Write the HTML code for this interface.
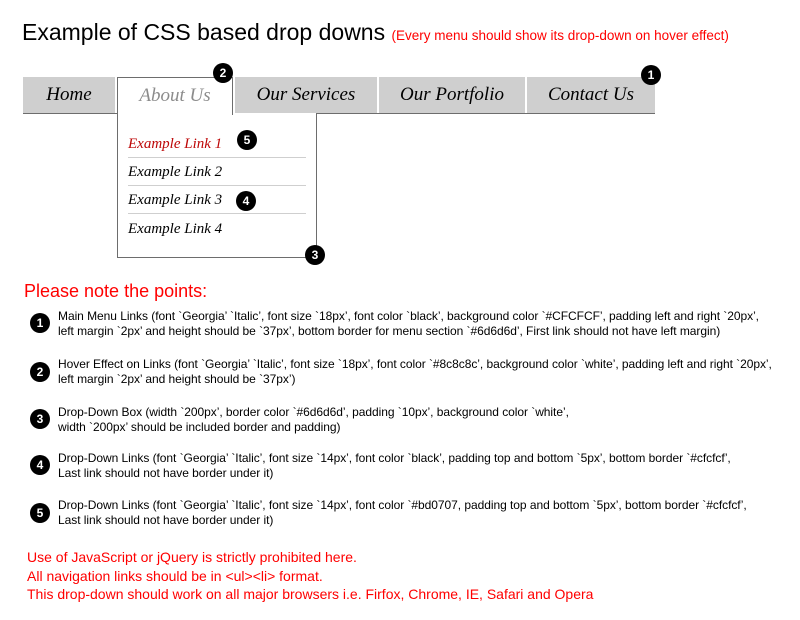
<!DOCTYPE html>
<html><head><meta charset="utf-8"><style>
*{margin:0;padding:0;box-sizing:border-box}
body{width:800px;height:620px;background:#fff;position:relative;overflow:hidden;font-family:"Liberation Sans","DejaVu Sans",sans-serif}
.a{position:absolute;white-space:nowrap}
.h1{left:22px;top:19px;font-size:23px;color:#000}
.red{color:#f00}
.m{position:absolute;top:77px;height:36px;background:#cfcfcf;font-family:"Liberation Serif",serif;font-style:italic;font-size:19px;line-height:36px;text-align:center}
.bb{position:absolute;left:23px;top:113px;width:632px;height:1px;background:#6d6d6d}
.dd{position:absolute;left:117px;top:113px;width:200px;height:145px;border:1px solid #6d6d6d;border-top:none;background:#fff}
.about{position:absolute;left:117px;top:77px;width:116px;height:38px;background:#fff;border:1px solid #6d6d6d;border-bottom:none;font-family:"Liberation Serif",serif;font-style:italic;font-size:19px;line-height:36px;text-align:center;color:#8c8c8c}
.lk{position:absolute;left:128px;width:178px;font-family:"Liberation Serif",serif;font-style:italic;font-size:15px;height:28px;line-height:28px;border-bottom:1px solid #cfcfcf}
.c{position:absolute;width:20px;height:20px;border-radius:50%;background:#000;color:#fff;font-size:12px;font-weight:bold;text-align:center;line-height:20px}
.p{position:absolute;left:58px;font-size:12px;line-height:15px;white-space:nowrap;letter-spacing:-0.05px}
.b{position:absolute;left:27px;font-size:14px;color:#f00;line-height:18px;white-space:nowrap}
</style></head><body>
<div class="a h1">Example of CSS based drop downs <span class="red" style="font-size:13.5px">(Every menu should show its drop-down on hover effect)</span></div>

<div class="m" style="left:23px;width:92px">Home</div>
<div class="m" style="left:235px;width:142px">Our Services</div>
<div class="m" style="left:379px;width:146px">Our Portfolio</div>
<div class="m" style="left:527px;width:128px">Contact Us</div>
<div class="bb"></div>
<div class="dd"></div>
<div class="about">About Us</div>
<div class="lk" style="top:130px;color:#bd0707">Example Link 1</div>
<div class="lk" style="top:158px">Example Link 2</div>
<div class="lk" style="top:186px">Example Link 3</div>
<div class="lk" style="top:215px;border:none">Example Link 4</div>

<div class="c" style="left:213px;top:63px">2</div>
<div class="c" style="left:641px;top:65px">1</div>
<div class="c" style="left:237px;top:130px">5</div>
<div class="c" style="left:236px;top:191px">4</div>
<div class="c" style="left:305px;top:245px">3</div>

<div class="a red" style="left:24px;top:281px;font-size:18px">Please note the points:</div>

<div class="c" style="left:30px;top:313px">1</div>
<div class="p" style="top:309px">Main Menu Links (font `Georgia’ `Italic’, font size `18px’, font color `black’, background color `#CFCFCF’, padding left and right `20px’,<br>left margin `2px’ and height should be `37px’, bottom border for menu section `#6d6d6d’, First link should not have left margin)</div>
<div class="c" style="left:30px;top:362px">2</div>
<div class="p" style="top:357px">Hover Effect on Links (font `Georgia’ `Italic’, font size `18px’, font color `#8c8c8c’, background color `white’, padding left and right `20px’,<br>left margin `2px’ and height should be `37px’)</div>
<div class="c" style="left:30px;top:409px">3</div>
<div class="p" style="top:405px">Drop-Down Box (width `200px’, border color `#6d6d6d’, padding `10px’, background color `white’,<br>width `200px’ should be included border and padding)</div>
<div class="c" style="left:30px;top:455px">4</div>
<div class="p" style="top:451px">Drop-Down Links (font `Georgia’ `Italic’, font size `14px’, font color `black’, padding top and bottom `5px’, bottom border `#cfcfcf’,<br>Last link should not have border under it)</div>
<div class="c" style="left:30px;top:503px">5</div>
<div class="p" style="top:498px">Drop-Down Links (font `Georgia’ `Italic’, font size `14px’, font color `#bd0707, padding top and bottom `5px’, bottom border `#cfcfcf’,<br>Last link should not have border under it)</div>

<div class="b" style="top:548px">Use of JavaScript or jQuery is strictly prohibited here.</div>
<div class="b" style="top:567px">All navigation links should be in &lt;ul&gt;&lt;li&gt; format.</div>
<div class="b" style="top:585px">This drop-down should work on all major browsers i.e. Firfox, Chrome, IE, Safari and Opera</div>
</body></html>
